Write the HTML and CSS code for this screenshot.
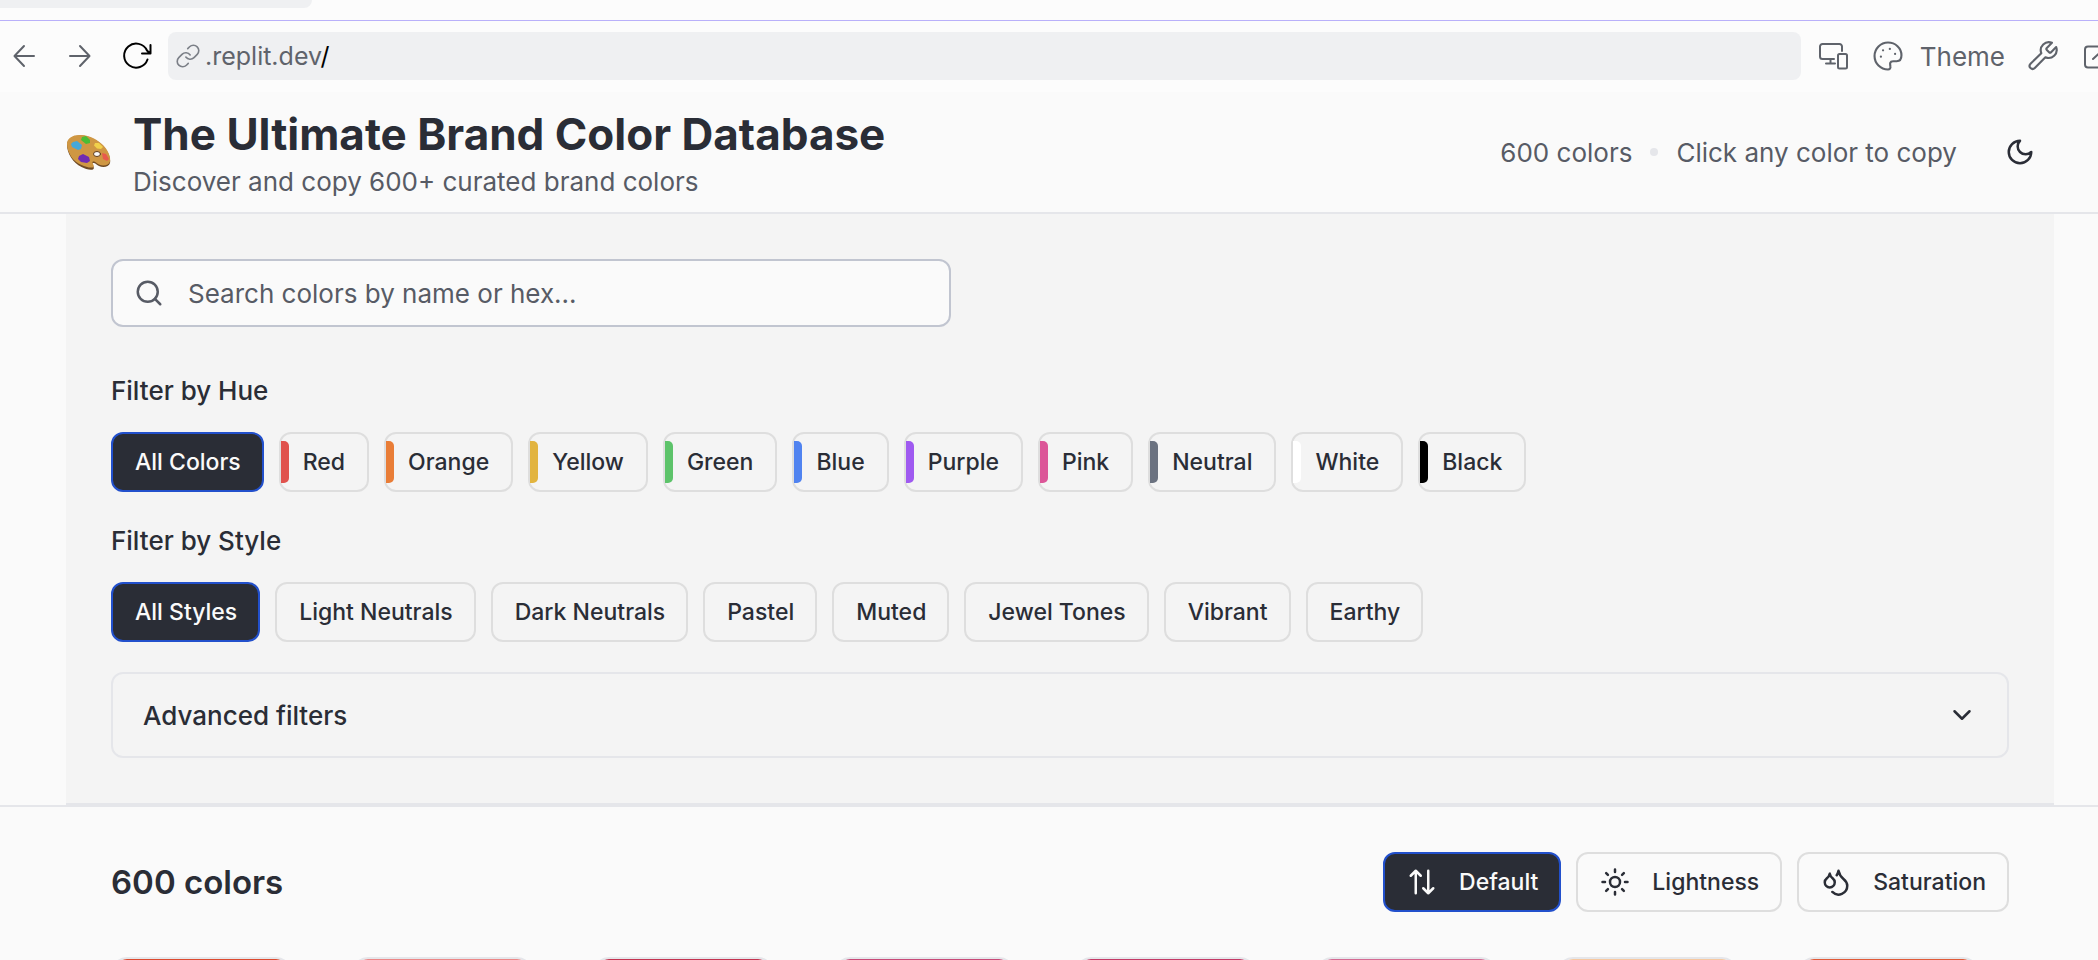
FILE: index.html
```html
<!DOCTYPE html>
<html lang="en">
<head>
<meta charset="utf-8">
<title>The Ultimate Brand Color Database</title>
<link rel="stylesheet" href="styles.css">
</head>
<body>
<div class="tab-strip"><div class="tab"></div></div>
<nav class="toolbar" aria-label="Preview">
  <div class="tool-group nav-group">
    <button class="tool" aria-label="Back"><svg class="tool-icon" viewBox="0 0 34 34"><path d="M27 17H8M17 7 7.500 17 17 27"/></svg></button>
    <button class="tool" aria-label="Forward"><svg class="tool-icon" viewBox="0 0 34 34"><path d="M7 17h19M17 7l9.500 10L17 27"/></svg></button>
    <button class="tool tool-dark" aria-label="Reload"><svg class="tool-icon" viewBox="0 0 34 34"><path d="M28.500 20.500A12 12 0 1 1 28 11.500M31.500 6v8.500h-8.500M31 14.500l-3-3"/></svg></button>
  </div>
  <div class="address">
    <svg class="link-icon" viewBox="0 0 24 24"><path d="M10 13a5 5 0 0 0 7.540.540l3-3a5 5 0 0 0-7.070-7.070l-1.720 1.710"/><path d="M14 11a5 5 0 0 0-7.540-.540l-3 3a5 5 0 0 0 7.070 7.070l1.710-1.710"/></svg>
    <span class="address-text">.replit.dev<span class="address-path">/</span></span>
  </div>
  <div class="tool-group side-group">
    <button class="tool" aria-label="Devices"><svg class="tool-icon" viewBox="0 0 34 34"><path d="M26 12V7.500a2.500 2.500 0 0 0-2.500-2.500h-17A2.500 2.500 0 0 0 4 7.500v10A2.500 2.500 0 0 0 6.500 20H18M14.500 20v4.500M10 24.500h9"/><rect x="22" y="15" width="9" height="14.500" rx="1.500"/></svg></button>
    <button class="tool-label"><svg class="tool-icon" viewBox="0 0 24 24"><path class="fine" d="M12 2.500a9.500 9.500 0 1 0 0 19c1.300 0 1.900-1 1.700-2.100-.100-.900-.400-1.600-.100-2.500.300-1 1.200-1.200 2.100-1.200h2.400c2.300 0 3.400-1.800 3.400-4.200C21.500 6.300 17.200 2.500 12 2.500Z"/><g class="spots"><circle cx="8.500" cy="8" r=".8"/><circle cx="13.300" cy="7" r=".8"/><circle cx="17" cy="10.500" r=".8"/><circle cx="7" cy="12.500" r=".8"/></g></svg>Theme</button>
    <button class="tool" aria-label="Tools"><svg class="tool-icon" viewBox="0 0 24 24"><path class="fine" d="M14.700 6.300a1 1 0 0 0 0 1.400l1.600 1.600a1 1 0 0 0 1.400 0l3.600-3.600a5.700 5.700 0 0 1-7.600 7.200l-7.500 7.600a2 2 0 0 1-3-3l7.600-7.500a5.700 5.700 0 0 1 7.500-7.300Z"/></svg></button>
    <button class="tool" aria-label="Open in new tab"><svg class="tool-icon" viewBox="0 0 34 34"><path d="M17 7.500H7A3 3 0 0 0 4 10.500v15a3 3 0 0 0 3 3h15a3 3 0 0 0 3-3V17M12 20 28 5M20 5h8v8"/></svg></button>
  </div>
</nav>
<header class="header">
  <div class="brand">
    <svg class="palette" viewBox="0 0 45 36" aria-hidden="true">
      <path fill="#6f4a24" d="M1 11C1 5 7 1 15 1.500c9 .500 17 5 22 10.500 5 5 8 12 7 17-1 4-7 5-11 3-2-1-4-3.500-6-3-2 1 2 4 .500 6-2 2-8 0-12-2C7 29 1 19 1 11Z"/>
      <path fill="#cf9743" d="M1 10C1 4 7 .500 15 1c9 .500 17 5 22 10 5 5 8 12 7 16.500-1 4-7 5-11 3-2-1-4-3.500-6-3-2 1 2 4 .500 5.500-2 1.500-8 0-12-2C7 28 1 18 1 10Z"/>
      <ellipse cx="31" cy="20" rx="3.500" ry="2.500" fill="#fafafa" stroke="#5e3b1b"/>
      <path fill="#46a8d8" d="m7 8 4-1 5 4-1 4-3 1-6-3-1-3Z"/>
      <path fill="#49bd35" d="m16 3 4-1 4 4v3l-4 1-5-4Z"/>
      <path fill="#f1d04b" d="m29 9 4 0 4 4-2 2-4-.500-3-3Z"/>
      <path fill="#e85a4c" d="m36 19 4 1 3 5-2 2-4-2Z"/>
      <path fill="#702bb2" d="m13 22 4-2 6 3 1 4-3 2-6-1-3-3Z"/>
    </svg>
    <div class="brand-text">
      <h1 class="title">The Ultimate Brand Color Database</h1>
      <p class="subtitle">Discover and copy 600+ curated brand colors</p>
    </div>
  </div>
  <div class="header-info">
    <span>600 colors</span><span class="dot"></span><span>Click any color to copy</span>
    <button class="mode" aria-label="Dark mode"><svg class="icon" viewBox="0 0 24 24"><path d="M12 3a6 6 0 0 0 9 9 9 9 0 1 1-9-9Z"/></svg></button>
  </div>
</header>
<main>
  <div class="panel-wrap">
    <section class="panel">
      <label class="search">
        <svg class="icon" viewBox="0 0 24 24"><circle cx="11" cy="11" r="8"/><path d="m21 21-4.300-4.300"/></svg>
        <input class="search-input" type="text" placeholder="Search colors by name or hex..." aria-label="Search colors">
      </label>
      <h2 class="label label-first">Filter by Hue</h2>
      <div class="chips">
        <button class="chip active">All Colors</button>
        <button class="chip hue red">Red</button>
        <button class="chip hue orange">Orange</button>
        <button class="chip hue yellow">Yellow</button>
        <button class="chip hue green">Green</button>
        <button class="chip hue blue">Blue</button>
        <button class="chip hue purple">Purple</button>
        <button class="chip hue pink">Pink</button>
        <button class="chip hue neutral">Neutral</button>
        <button class="chip hue white">White</button>
        <button class="chip hue black">Black</button>
      </div>
      <h2 class="label">Filter by Style</h2>
      <div class="chips">
        <button class="chip active">All Styles</button>
        <button class="chip">Light Neutrals</button>
        <button class="chip">Dark Neutrals</button>
        <button class="chip">Pastel</button>
        <button class="chip">Muted</button>
        <button class="chip">Jewel Tones</button>
        <button class="chip">Vibrant</button>
        <button class="chip">Earthy</button>
      </div>
      <button class="advanced" aria-expanded="false">Advanced filters<svg class="icon" viewBox="0 0 24 24"><path d="m6 9 6 6 6-6"/></svg></button>
    </section>
  </div>
  <section class="results">
    <div class="results-head">
      <h2 class="count">600 colors</h2>
      <div class="chips">
        <button class="chip sort active"><svg class="icon" viewBox="0 0 24 24"><path d="m3 7 4-4 4 4M7 3v18M13 17l4 4 4-4M17 21V3"/></svg>Default</button>
        <button class="chip sort"><svg class="icon" viewBox="0 0 24 24"><circle cx="12" cy="12" r="4"/><path d="M12 2v2M12 20v2M4.930 4.930l1.410 1.410M17.660 17.660l1.410 1.410M2 12h2M20 12h2M6.340 17.660l-1.410 1.410M19.070 4.930l-1.410 1.410"/></svg>Lightness</button>
        <button class="chip sort"><svg class="icon" viewBox="0 0 24 24"><path d="M7 16.300c2.200 0 4-1.830 4-4.050 0-1.160-.570-2.260-1.710-3.190S7.290 6.750 7 5.300c-.290 1.450-1.140 2.840-2.290 3.760S3 11.100 3 12.250c0 2.220 1.800 4.050 4 4.050z"/><path d="M12.560 6.600A10.970 10.970 0 0 0 14 3.020c.500 2.500 2 4.900 4 6.500s3 3.500 3 5.500a6.980 6.980 0 0 1-11.910 4.970"/></svg>Saturation</button>
      </div>
    </div>
    <div class="swatches">
      <div class="swatch vermilion"></div>
      <div class="swatch salmon"></div>
      <div class="swatch crimson"></div>
      <div class="swatch raspberry"></div>
      <div class="swatch ruby"></div>
      <div class="swatch rose"></div>
      <div class="swatch peach"></div>
      <div class="swatch tangerine"></div>
    </div>
  </section>
</main>
</body>
</html>
```
FILE: styles.css
```css
* { box-sizing: border-box; }
body {
  margin: 0;
  background: #fafafa;
  color: #2a2d36;
  font-family: Inter, "Liberation Sans", sans-serif;
  font-size: 26px;
  height: 100vh;
  overflow: hidden;
}
button, input { font: inherit; color: inherit; background: none; border: 0; margin: 0; padding: 0; }
h1, h2, p { margin: 0; }
svg { display: block; flex: none; fill: none; stroke: currentColor; stroke-linecap: round; stroke-linejoin: round; }
.icon { width: 30px; height: 30px; stroke-width: 2; }

.tab-strip { height: 21px; background: #fcfcfc; border-bottom: 1px solid #b9b0fa; }
.tab { width: 312px; height: 8px; background: #eff0f2; border-bottom-right-radius: 8px; }
.toolbar {
  display: flex;
  align-items: center;
  gap: 15px;
  height: 71px;
  padding: 0 0 1px 7px;
  background: #fcfcfc;
  color: #5f636b;
}
.tool-group { display: flex; align-items: center; }
.nav-group { gap: 22px; }
.side-group { gap: 21px; margin-right: -17px; }
.tool-icon { width: 34px; height: 34px; stroke-width: 2; }
.tool-dark { color: #000; }
.fine { stroke-width: 1.5; }
.spots { fill: currentColor; stroke: none; }
.tool-label { display: flex; align-items: center; gap: 15px; }
.address {
  display: flex;
  flex: 1;
  align-items: center;
  gap: 4px;
  height: 48px;
  padding: 0 7px;
  border-radius: 8px;
  background: #eff0f2;
  font-size: 25px;
}
.link-icon { width: 26px; height: 26px; stroke-width: 1.5; color: #7b7f87; }
.address-path { color: #000; }

.header {
  display: flex;
  align-items: center;
  justify-content: space-between;
  height: 122px;
  padding: 0 63px 0 66px;
  border-bottom: 2px solid #e5e6ea;
}
.brand { display: flex; align-items: center; gap: 22px; }
.brand-text { padding-top: 4px; }
.palette { width: 45px; height: 36px; stroke: none; }
.title { font-size: 44px; font-weight: 700; line-height: 56px; }
.subtitle { line-height: 40px; color: #575b65; }
.header-info { display: flex; align-items: center; gap: 18px; color: #575b65; }
.dot { width: 8px; height: 8px; border-radius: 50%; background: #e5e6ea; }
.mode { margin-left: 30px; color: #2a2d36; }

.panel-wrap { padding: 0 44px 0 66px; border-bottom: 2px solid #e5e6ea; }
.panel { padding: 45px; background: #f4f4f4; border-bottom: 2px solid #e5e6ea; }
.search {
  display: flex;
  align-items: center;
  gap: 24px;
  width: 100%;
  max-width: 840px;
  height: 68px;
  padding: 0 21px;
  border: 2px solid #c1c5d0;
  border-radius: 12px;
  background: #fafafa;
  color: #575b65;
}
.search-input { flex: 1; min-width: 0; outline: 0; }
.search-input::placeholder { color: #575b65; opacity: 1; }
.label { margin: 29px 0 21px; font-size: 26px; font-weight: 500; line-height: 40px; }
.label-first { margin-top: 44px; }
.chips { display: flex; flex-wrap: wrap; gap: 15px; }
.chip {
  position: relative;
  display: flex;
  align-items: center;
  gap: 22px;
  height: 60px;
  padding: 0 21px 0 22px;
  border: 2px solid #dedede;
  border-radius: 12px;
  font-size: 23px;
  font-weight: 500;
}
.chip.active { background: #2a2d36; border-color: #2250cc; color: #fafafa; }
.hue { padding-right: 22px; }
.hue::before {
  content: "";
  position: absolute;
  left: 0;
  top: 7px;
  bottom: 7px;
  width: 8px;
  border-radius: 0 5px 5px 0;
  background: var(--tone);
}
.red { --tone: #e0524d; }
.orange { --tone: #e97d37; }
.yellow { --tone: #e2b43f; }
.green { --tone: #5dc36a; }
.blue { --tone: #5083f0; }
.purple { --tone: #9f5af0; }
.pink { --tone: #dc5698; }
.neutral { --tone: #6b7280; }
.white { --tone: #fff; }
.black { --tone: #000; }
.advanced {
  display: flex;
  align-items: center;
  justify-content: space-between;
  width: 100%;
  height: 86px;
  margin-top: 30px;
  padding: 0 30px;
  border: 2px solid #e5e6ea;
  border-radius: 12px;
  font-weight: 500;
}

.results { padding: 45px 89px 0 111px; }
.results-head { display: flex; align-items: center; justify-content: space-between; margin-bottom: 45px; }
.count { font-size: 33px; font-weight: 600; }
.swatches { display: grid; grid-template-columns: repeat(8, 1fr); gap: 30px; }
.swatch { height: 180px; margin-right: 30px; border: 2px solid #e5e6ea; border-radius: 16px; background: var(--fill) padding-box; }
.vermilion { --fill: #dc4a2f; }
.salmon { --fill: #ec8787; }
.crimson { --fill: #c43450; }
.raspberry { --fill: #c84a77; }
.ruby { --fill: #c43a66; }
.rose { --fill: #d46a92; }
.peach { --fill: #f6c8a0; }
.tangerine { --fill: #e05a38; }
```
